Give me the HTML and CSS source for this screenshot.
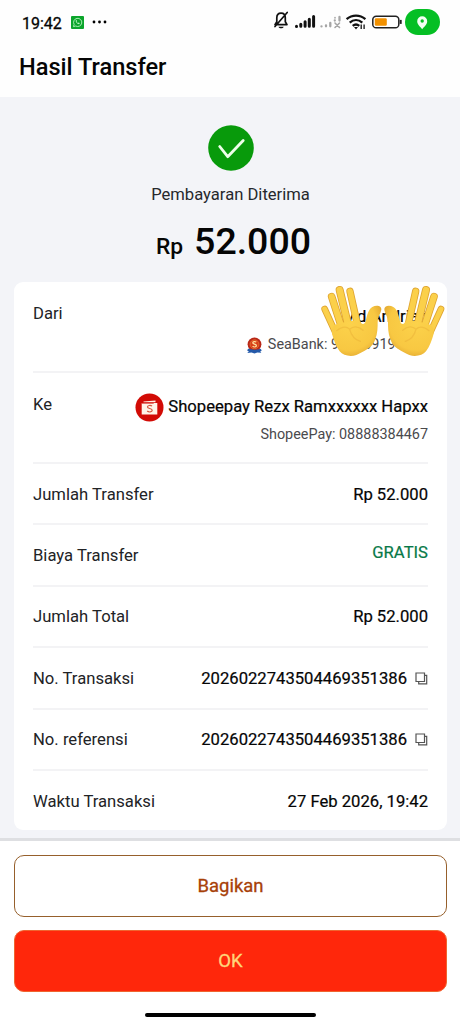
FILE: index.html
```
<!DOCTYPE html>
<html lang="id">
<head>
<meta charset="utf-8">
<title>Hasil Transfer</title>
<link rel="stylesheet" href="styles.css">
</head>
<body>
<div class="screen">
  <header class="top">
    <div class="status">
      <span class="clock">19:42</span>
      <svg class="wa" width="13" height="13" viewBox="0 0 13 13"><rect width="13" height="13" rx="1" fill="#0ba52b"/><path d="M2.5 10.6l.6-2.2A4.1 4.1 0 1 1 4.7 10z" fill="none" stroke="#b9f5c0" stroke-width=".9"/><path d="M4.8 4.3c-.5 1.9 1.7 4.1 3.6 3.8l.3-1-1.2-.5-.5.5c-.7-.3-1.1-.8-1.4-1.4l.4-.6-.4-1z" fill="#b9f5c0"/></svg>
      <svg class="dots" width="15" height="4" viewBox="0 0 15 4"><circle cx="2" cy="2" r="1.4"/><circle cx="7.5" cy="2" r="1.4"/><circle cx="13" cy="2" r="1.4"/></svg>
      <svg class="indicators" width="136" height="28" viewBox="0 0 136 28">
        <path d="M6 19.600h12l-1.700-2.800v-4c0-2.700-1.600-4.700-4.200-4.700s-4.300 2-4.300 4.700v4zM18.200 7.500L6 21.500" fill="none" stroke="#111" stroke-width="1.700" stroke-linecap="round" stroke-linejoin="round"/>
        <path d="M9.500 21.800h5.200c-.6 2-4.600 2-5.200 0z" fill="#111"/>
        <path d="M27.500 21.300v.1M31.800 19.300v2M36.100 16.800v4.500M40.300 14.300v7M44.600 11.600v9.700" stroke="#111" stroke-width="3" stroke-linecap="round"/>
        <g stroke="#a5a5a5" stroke-width="2.300" stroke-linecap="round"><path d="M52.500 21.300v.1M57 20.300v1M61.300 18v3.300M65.800 15.500v.1M70.500 12v3.500"/><path d="M66 18l4.500 4.500M70.500 18L66 22.500M66 12.500v.5" stroke-width="1.600"/></g>
        <g fill="none" stroke="#111" stroke-width="2.300"><path d="M77.600 14.200c5.500-4.800 13.300-4.800 18.800 0"/><path d="M80.700 17.600c3.800-3.300 8.800-3.300 12.600 0"/><path d="M83.700 20.800c2-1.600 4.600-1.600 6.600 0"/></g>
        <path d="M85 22h4l-2 2.400z" fill="#111"/><path d="M92.200 24v-4.500M95.100 19.500V24" stroke="#111" stroke-width="1.300"/>
        <rect x="103.800" y="11.200" width="26" height="11.600" rx="3.400" fill="#fff" stroke="#222" stroke-width="1.500"/>
        <rect x="105.800" y="13.200" width="12" height="7.600" rx="1.300" fill="#f29100"/>
        <path d="M131.700 14.900v4" stroke="#222" stroke-width="2"/>
      </svg>
      <svg class="loc" width="35" height="26" viewBox="0 0 35 26"><rect width="35" height="26" rx="13" fill="#05bf24"/><path d="M17.200 20.200c-2-2.700-5-4.800-5-8a5 5 0 0 1 10 0c0 3.200-3 5.300-5 8z" fill="#f3fff3"/><circle cx="17.200" cy="12" r="1.700" fill="#05bf24"/></svg>
    </div>
    <h1 class="title">Hasil Transfer</h1>
  </header>

  <main class="body">
    <svg class="check" width="46" height="46" viewBox="0 0 46 46"><circle cx="23" cy="23" r="22.800" fill="#089a0b"/><path d="M11.700 21.500l8 10.200L35.200 15.500" fill="none" stroke="#edffe9" stroke-width="2.800" stroke-linecap="round" stroke-linejoin="round"/></svg>
    <p class="state">Pembayaran Diterima</p>
    <p class="amount"><span class="cur">Rp</span><span class="num">52.000</span></p>

    <section class="card">
      <div class="row from">
        <span class="label">Dari</span>
        <div class="party">
          <div class="name">Md Andrian</div>
          <div class="acct"><svg width="17" height="17" viewBox="0 0 17 17"><path d="M.8 13l2.500-1 10.500.2 2.200.8-1.700 1.200 1 1.600-4-.2-2.800.8-3-.8-4.200.5 1.500-1.800z" fill="#245aaa"/><circle cx="8.500" cy="7.300" r="6.900" fill="#b92717"/><circle cx="8.500" cy="7.300" r="4.500" fill="#d93f18" stroke="#ed8c3a" stroke-width=".6"/><path d="M10.300 5.200c-1-1-3.600-.8-3.500.7s3.600 1 3.600 2.700-2.700 1.800-3.800.6" fill="none" stroke="#ffe3a0" stroke-width="1.200"/><path d="M2 12.500c3 1.600 9.500 1.600 13 .2" fill="none" stroke="#245aaa" stroke-width="2"/></svg><span>SeaBank: 900009190000</span></div>
        </div>
        <svg class="hands" width="150" height="90" viewBox="0 0 450 270">
          <defs>
            <radialGradient id="skin" gradientUnits="userSpaceOnUse" cx="118" cy="145" r="115"><stop offset="0" stop-color="#fcd24b"/><stop offset=".7" stop-color="#f8c842"/><stop offset="1" stop-color="#dda02c"/></radialGradient>
            <g id="hand">
              <g fill="none" stroke-linecap="round">
                <g stroke="#dfa532"><path d="M44 102L82 185" stroke-width="20"/><path d="M65 65L99 170" stroke-width="23"/><path d="M89 45L118 165" stroke-width="24"/><path d="M120 49L146 165" stroke-width="22"/></g>
                <g stroke="#fbd04a"><path d="M44 102L82 185" stroke-width="15"/><path d="M65 65L99 170" stroke-width="18"/><path d="M89 45L118 165" stroke-width="19"/><path d="M120 49L146 165" stroke-width="17"/></g>
              </g>
              <path d="M67 158C76 144 88 147 96 144C107 139 113 142 121 138C133 139 145 132 153 143C157 149 161 148 165 143C171 128 172 105 187 96C199 89 215 92 214 104C212 115 204 124 203 140C203 158 203 173 196 193C188 219 160 230 139 240C122 246 99 242 89 229C77 214 71 193 66 176Z" fill="url(#skin)"/>
              <path d="M80 167C94 156 109 153 119 163C132 151 148 156 159 166M119 163C124 182 134 194 151 199" fill="none" stroke="#e6ae35" stroke-width="4" opacity=".45" stroke-linecap="round"/>
            </g>
          </defs>
          <use href="#hand"/>
          <use href="#hand" transform="translate(437 0) scale(-1 1)"/>
        </svg>
      </div>
      <div class="row to">
        <span class="label">Ke</span>
        <div class="party">
          <div class="name shopee"><svg width="29" height="29" viewBox="0 0 29 29"><circle cx="14.500" cy="14.500" r="14" fill="#d20b05"/><path d="M6.700 10h15.600v11.500H6.700zM8.500 8.600l12-1.200v1.800h-12z" fill="#fff4e8"/><path d="M6.700 10.300h12" stroke="#d20b05" stroke-width=".7"/><path d="M17 13.200c-1.200-1.200-4.600-1-4.500.8s4.700 1.200 4.700 3.300-3.600 2.100-5 .7" fill="none" stroke="#d4563e" stroke-width="1.200"/></svg><span>Shopeepay Rezx Ramxxxxxx Hapxx</span></div>
          <div class="acct">ShopeePay: 08888384467</div>
        </div>
      </div>
      <div class="row"><span class="label">Jumlah Transfer</span><span class="value">Rp 52.000</span></div>
      <div class="row"><span class="label">Biaya Transfer</span><span class="value free">GRATIS</span></div>
      <div class="row"><span class="label">Jumlah Total</span><span class="value">Rp 52.000</span></div>
      <div class="row"><span class="label">No. Transaksi</span><span class="value id">2026022743504469351386<svg class="copy" width="13" height="13" viewBox="0 0 13 13"><path d="M1 1h8.500v8.500H1zM9.500 3.300h2.200v8.500H3.700V9.500" fill="none" stroke="#555" stroke-width="1.200"/></svg></span></div>
      <div class="row"><span class="label">No. referensi</span><span class="value id">2026022743504469351386<svg class="copy" width="13" height="13" viewBox="0 0 13 13"><path d="M1 1h8.500v8.500H1zM9.500 3.300h2.200v8.500H3.700V9.500" fill="none" stroke="#555" stroke-width="1.200"/></svg></span></div>
      <div class="row last"><span class="label">Waktu Transaksi</span><span class="value">27 Feb 2026, 19:42</span></div>
    </section>
  </main>

  <footer class="actions">
    <button class="btn share">Bagikan</button>
    <button class="btn ok">OK</button>
    <div class="homebar"></div>
  </footer>
</div>
</body>
</html>
```
FILE: styles.css
```
* { box-sizing: border-box; margin: 0; padding: 0; }
body { background: #fff; font-family: Roboto, "Liberation Sans", sans-serif; color: #050505; }
svg { display: block; flex: none; }
.screen { width: 460px; height: 1024px; display: flex; flex-direction: column; overflow: hidden; }

.top { height: 97px; background: #fefefe; }
.status { height: 44px; display: flex; align-items: center; padding-left: 22px; }
.clock { width: 40px; font-size: 16px; font-weight: 400; line-height: 20px; margin-top: 3px; white-space: nowrap; -webkit-text-stroke: .3px; }
.wa { margin-left: 9px; }
.dots { margin-left: 8px; }
.indicators { margin-left: 162px; margin-top: 10px; margin-bottom: 0; align-self: flex-start; margin-top: 5px; }
.title { font-size: 23.600px; font-weight: 500; line-height: 28px; padding-left: 19px; margin-top: 9px; }

.body { height: 741px; background: #f3f4f8; padding: 28px 13px 0 14px; }
.check { margin: 0 auto; }
.state { text-align: center; font-size: 16.600px; line-height: 20px; margin-top: 14px; color: #26282c; }
.amount { display: flex; justify-content: center; align-items: baseline; gap: 11px; margin-top: 14px; height: 63px; line-height: 44px; font-weight: 500; padding-left: 6px; }
.cur { font-size: 22.800px; }
.num { font-size: 37.500px; }

.card { height: 548px; background: #fff; border-radius: 9px; padding: 0 19px; }
.row { height: 61.400px; display: flex; justify-content: space-between; align-items: center; padding-top: 2px; border-bottom: 2px solid #f3f3f5; font-size: 16.650px; line-height: 20px; }
.row.from { height: 91px; align-items: flex-start; padding-top: 22px; position: relative; }
.row.to { height: 91px; align-items: flex-start; padding-top: 22px; }
.row.last { border-bottom: 0; padding-top: 0; }
.label { color: #222326; white-space: nowrap; }
.value, .name { -webkit-text-stroke: .2px; white-space: nowrap; }
.party { text-align: right; }
.name { height: 20px; margin-top: 3px; }
.to .name { margin-top: 2px; }
.acct { display: flex; align-items: center; justify-content: flex-end; gap: 5px; font-size: 14.400px; color: #4a4a4d; margin-top: 8px; white-space: nowrap; }
.shopee { display: flex; align-items: center; justify-content: flex-end; gap: 4px; }
.free { color: #087948; margin-bottom: 7px; }
.id { display: flex; align-items: center; gap: 8px; }
.copy { margin-bottom: 1px; }
.hands { position: absolute; left: 277px; top: -7px; }

.actions { height: 186px; background: #fff; border-top: 3px solid #dedfe2; padding: 14px 13px 0 14px; }
.btn { display: block; width: 100%; height: 62px; border-radius: 10px; font: 400 18.500px/24px Roboto, "Liberation Sans", sans-serif; -webkit-text-stroke: .3px; }
.share { background: #fff; border: 1.500px solid #96602c; color: #a74108; }
.ok { margin-top: 13px; background: #ff270b; border: 1px solid #ef6530; color: #ffd57a; }
.homebar { width: 171px; height: 4px; border-radius: 2px; background: #000; margin: 21px auto 0; }
```
